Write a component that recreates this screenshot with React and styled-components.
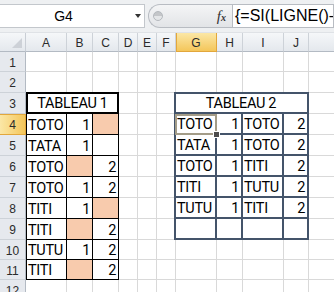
import React from 'react'
import styled, { createGlobalStyle, css } from 'styled-components'

const COLS = [
  ['A', 41], ['B', 26], ['C', 26], ['D', 19], ['E', 19], ['F', 19],
  ['G', 41], ['H', 26], ['I', 41], ['J', 25], ['K', 64],
]
const ROWS = [20, 21, 21, 21, 21, 21, 21, 21, 21, 20, 20, 21]

// '#' = peach filled cell
const TABLE1 = [
  ['TOTO', '1', '#'],
  ['TATA', '1', ''],
  ['TOTO', '#', '2'],
  ['TOTO', '1', '2'],
  ['TITI', '1', '#'],
  ['TITI', '#', '2'],
  ['TUTU', '1', '2'],
  ['TITI', '#', '2'],
]

const TABLE2 = [
  ['TOTO', '1', 'TOTO', '2'],
  ['TATA', '1', 'TOTO', '2'],
  ['TOTO', '1', 'TITI', '2'],
  ['TITI', '1', 'TUTU', '2'],
  ['TUTU', '1', 'TITI', '2'],
  ['', '', '', ''],
]

const CELL_FONT = `Roboto, "Liberation Sans", sans-serif`
const UI_FONT = `"Liberation Sans", Arial, sans-serif`
const SLATE = '#44546a'

const GlobalStyle = createGlobalStyle`
  html, body { margin: 0; padding: 0; background: #fff; }
  body { overflow: hidden; }
`

const Window = styled.div`
  width: 334px;
  height: 292px;
  overflow: hidden;
  display: flex;
  flex-direction: column;
  background: #fff;
`

const FormulaBar = styled.div`
  flex: none;
  height: 32px;
  box-sizing: border-box;
  padding: 4px 0;
  display: flex;
  background: #eef0f2;
  font-family: ${UI_FONT};
`

const NameBox = styled.div`
  flex: none;
  width: 145px;
  box-sizing: border-box;
  display: grid;
  grid-template-columns: 1fr 17px;
  align-items: center;
  background: #fff;
  border: 1px solid #c3c7cc;
  border-left: none;
`

const NameText = styled.span`
  text-align: center;
  font-size: 14px;
  color: #000;
`

const DropArrow = styled.span`
  justify-self: start;
  margin-left: 8px;
  width: 0;
  height: 0;
  border-left: 3.5px solid transparent;
  border-right: 3.5px solid transparent;
  border-top: 4px solid #333;
`

const Splitter = styled.div`
  flex: none;
  width: 84px;
  margin-left: 3px;
  box-sizing: border-box;
  display: flex;
  align-items: center;
  padding-left: 4px;
  border: 1px solid #b8bcc2;
  border-right: none;
  border-radius: 12px 0 0 12px;
  background: linear-gradient(#f4f5f6, #e2e4e7);
`

const Knob = styled.span`
  width: 10px;
  height: 10px;
  box-sizing: border-box;
  border-radius: 50%;
  border: 1px solid #b4b8bd;
  background: linear-gradient(#c4c6c9 0 50%, #e4e6e8 50%);
`

const Fx = styled.span`
  margin-left: auto;
  margin-right: 6px;
  font-family: "Liberation Serif", serif;
  font-style: italic;
  font-size: 15px;
  color: #333;

  small {
    font-size: 10px;
    font-weight: bold;
  }
`

const FormulaInput = styled.div`
  flex: 1;
  min-width: 0;
  box-sizing: border-box;
  padding-left: 2px;
  background: #fff;
  border: 1px solid #b8bcc2;
  font-size: 16px;
  line-height: 22px;
  color: #000;
  white-space: nowrap;
  overflow: hidden;
`

const Sheet = styled.div`
  flex: none;
  display: grid;
  grid-template-columns: 26px ${COLS.map(c => c[1] + 'px').join(' ')};
  grid-template-rows: 19px ${ROWS.map(h => h + 'px').join(' ')};
  border-top: 1px solid #dfe2e6;
`

const headBg = p =>
  p.$active ? 'linear-gradient(#fbe7a6, #f4c65a)' : 'linear-gradient(#f5f7f9, #e4e8ed)'

const Corner = styled.div`
  grid-area: 1 / 1;
  box-sizing: border-box;
  display: flex;
  align-items: flex-end;
  justify-content: flex-end;
  padding: 0 3px 3px 0;
  background: linear-gradient(#f5f7f9, #e4e8ed);
  border-right: 1px solid #c9ced5;
  border-bottom: 1px solid #b3bac3;
`

const CornerMark = styled.span`
  width: 0;
  height: 0;
  border-left: 10px solid transparent;
  border-bottom: 10px solid #cdd1d7;
`

const ColHead = styled.div`
  grid-area: 1 / ${p => p.$c};
  box-sizing: border-box;
  display: flex;
  align-items: center;
  justify-content: center;
  padding-top: 1px;
  font-family: ${UI_FONT};
  font-size: 12px;
  color: #2b2b2b;
  background: ${headBg};
  border-right: 1px solid ${p => (p.$active ? '#e2a73c' : '#cdd2d8')};
  border-bottom: 1px solid ${p => (p.$active ? '#e2a73c' : '#b3bac3')};
  ${p => p.$active && css`box-shadow: inset 1px 0 0 #e2a73c;`}
`

const RowHead = styled.div`
  grid-area: ${p => p.$r} / 1;
  box-sizing: border-box;
  display: flex;
  align-items: center;
  justify-content: center;
  padding-top: 2px;
  font-family: ${UI_FONT};
  font-size: 12px;
  color: #2b2b2b;
  background: ${p => (p.$active ? 'linear-gradient(90deg, #fbe7a6, #f4c65a)' : '#e6e9ee')};
  border-right: 1px solid ${p => (p.$active ? '#e2a73c' : '#b3bac3')};
  border-bottom: 1px solid ${p => (p.$active ? '#e2a73c' : '#cdd2d8')};
  ${p => p.$active && css`box-shadow: inset 0 1px 0 #e2a73c;`}
`

const GridCell = styled.div`
  grid-area: ${p => p.$r} / ${p => p.$c};
  border-right: 1px solid #d9d9d9;
  border-bottom: 1px solid #d9d9d9;
`

const Title1 = styled.div`
  grid-area: 4 / 2 / 5 / 5;
  margin-top: -1px;
  box-sizing: border-box;
  display: flex;
  align-items: flex-end;
  justify-content: center;
  padding-bottom: 1px;
  border: 2px solid #000;
  background: #fff;
  font-family: ${CELL_FONT};
  font-size: 14.5px;
  letter-spacing: -0.3px;
  line-height: 1;
  color: #000;
`

const Body1 = styled.div`
  grid-area: 5 / 2 / 13 / 5;
  display: grid;
  grid-template-columns: 40px 26px 26px;
  grid-template-rows: ${ROWS.slice(3, 11).map(h => h + 'px').join(' ')};
  border-left: 1px solid #000;
`

const Table2 = styled.div`
  grid-area: 4 / 8 / 11 / 12;
  margin: -1px 0 0 -2px;
  display: grid;
  grid-template-columns: 41px 26px 41px 25px;
  grid-template-rows: 20px repeat(6, 21px);
  border-left: 2px solid ${SLATE};
  border-top: 2px solid ${SLATE};
`

const DataCell = styled.div`
  position: relative;
  box-sizing: border-box;
  display: flex;
  align-items: flex-end;
  justify-content: ${p => (p.$num ? 'flex-end' : p.$center ? 'center' : 'flex-start')};
  padding: 0 2px 1px 1px;
  ${p => p.$span && css`grid-column: 1 / -1;`}
  background: ${p => (p.$fill ? '#f8cbad' : '#fff')};
  border-right: ${p => p.$edge};
  border-bottom: ${p => p.$edge};
  font-family: ${CELL_FONT};
  font-size: 14.5px;
  letter-spacing: -0.3px;
  line-height: 1;
  color: #000;
  white-space: nowrap;

  ${p =>
    p.$active &&
    css`
      &::after {
        content: '';
        position: absolute;
        left: -1px;
        top: 0;
        right: -2px;
        bottom: -2px;
        border: 2px solid #a39c88;
        z-index: 1;
      }
      &::before {
        content: '';
        position: absolute;
        right: -5px;
        bottom: -5px;
        width: 5px;
        height: 5px;
        background: #4d4d4d;
        border: 1px solid #fff;
        z-index: 2;
      }
    `}
`

const isNum = v => /^\d+$/.test(v)

export default function App() {
  const rowCount = ROWS.length
  return (
    <Window>
      <GlobalStyle />
      <FormulaBar>
        <NameBox>
          <NameText>G4</NameText>
          <DropArrow />
        </NameBox>
        <Splitter>
          <Knob />
          <Fx>f<small>x</small></Fx>
        </Splitter>
        <FormulaInput>{'{=SI(LIGNE()-3'}</FormulaInput>
      </FormulaBar>

      <Sheet>
        <Corner>
          <CornerMark />
        </Corner>
        {COLS.map(([name], i) => (
          <ColHead key={name} $c={i + 2} $active={name === 'G'}>
            {name}
          </ColHead>
        ))}
        {Array.from({ length: rowCount }, (_, r) => (
          <React.Fragment key={r}>
            <RowHead $r={r + 2} $active={r + 1 === 4}>
              {r + 1}
            </RowHead>
            {COLS.map(([name], c) => (
              <GridCell key={name} $r={r + 2} $c={c + 2} />
            ))}
          </React.Fragment>
        ))}

        <Title1>TABLEAU 1</Title1>
        <Body1>
          {TABLE1.flatMap((row, r) =>
            row.map((v, c) => (
              <DataCell
                key={`${r}-${c}`}
                $edge="1px solid #000"
                $fill={v === '#'}
                $num={isNum(v)}
              >
                {v === '#' ? '' : v}
              </DataCell>
            ))
          )}
        </Body1>

        <Table2>
          <DataCell $span $center $edge={`2px solid ${SLATE}`}>
            TABLEAU 2
          </DataCell>
          {TABLE2.flatMap((row, r) =>
            row.map((v, c) => (
              <DataCell
                key={`${r}-${c}`}
                $edge={`2px solid ${SLATE}`}
                $num={isNum(v)}
                $active={r === 0 && c === 0}
              >
                {v}
              </DataCell>
            ))
          )}
        </Table2>
      </Sheet>
    </Window>
  )
}
